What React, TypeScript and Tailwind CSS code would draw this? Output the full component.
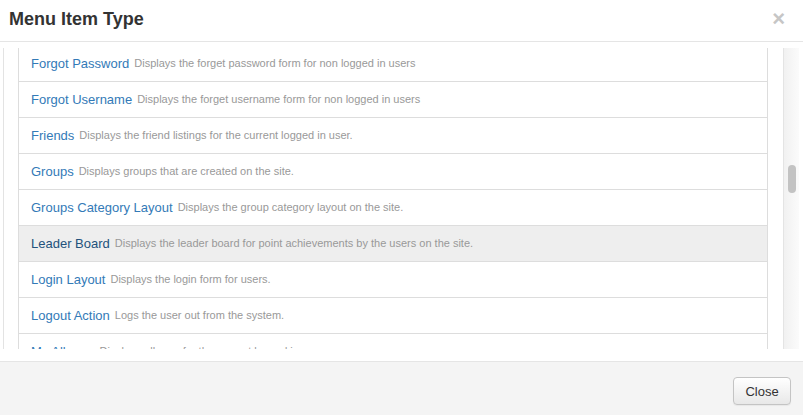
import React from "react";

type Item = { title: string; desc: string; active?: boolean };

const items: Item[] = [
  { title: "Forgot Password", desc: "Displays the forget password form for non logged in users" },
  { title: "Forgot Username", desc: "Displays the forget username form for non logged in users" },
  { title: "Friends", desc: "Displays the friend listings for the current logged in user." },
  { title: "Groups", desc: "Displays groups that are created on the site." },
  { title: "Groups Category Layout", desc: "Displays the group category layout on the site." },
  {
    title: "Leader Board",
    desc: "Displays the leader board for point achievements by the users on the site.",
    active: true,
  },
  { title: "Login Layout", desc: "Displays the login form for users." },
  { title: "Logout Action", desc: "Logs the user out from the system." },
  { title: "My Albums", desc: "Displays albums for the current logged in user." },
  { title: "My Photos", desc: "Displays photos for the current logged in user." },
];

function Row({ item }: { item: Item }) {
  return (
    <div
      className={
        "h-[36px] border-t border-[#dddddd] flex items-center pl-[12px] whitespace-nowrap " +
        (item.active ? "bg-[#eeeeee]" : "bg-white")
      }
    >
      <span
        className={
          "text-[13px] leading-none " + (item.active ? "text-[#23527c]" : "text-[#337ab7]")
        }
      >
        {item.title}
      </span>
      <span className="ml-[5px] text-[11px] leading-none text-[#999999]">{item.desc}</span>
    </div>
  );
}

export default function App() {
  return (
    <div
      className="w-[803px] h-[415px] bg-white flex flex-col overflow-hidden"
      style={{ fontFamily: '"Liberation Sans", Arial, sans-serif' }}
    >
      {/* header */}
      <div className="h-[42px] shrink-0 border-b border-[#e5e5e5] flex items-center justify-between pl-[9px] pr-[18px] pb-[4px]">
        <h4 className="text-[18px] font-bold text-[#333333] leading-none">Menu Item Type</h4>
        <button className="text-[#c6c6c6] text-[22px] font-bold leading-none">×</button>
      </div>

      {/* body */}
      <div className="pt-[6px] shrink-0">
        <div className="h-[301px] flex">
          <div className="ml-[3px] border-l border-[#e3e3e3] flex-1 overflow-hidden pl-[14px]">
            <div className="-mt-[3px] border-l border-r border-[#dddddd]">
              {items.map((it) => (
                <Row key={it.title} item={it} />
              ))}
            </div>
          </div>
          <div className="w-[15px]" />
          <div className="w-[16px] border-l border-[#e4e4e4] bg-gradient-to-r from-[#f1f1f1] to-[#fbfbfb]">
            <div className="mt-[117px] ml-[4px] w-[8px] h-[28px] rounded-full bg-[#c3c3c3]" />
          </div>
          <div className="w-[4px]" />
        </div>
      </div>

      {/* footer */}
      <div className="mt-[12px] flex-1 border-t border-[#e5e5e5] bg-[#f4f4f4] flex justify-end items-start pt-[15px] pr-[12px]">
        <button className="w-[58px] h-[28px] rounded-[4px] border border-[#c4c4c4] bg-gradient-to-b from-white to-[#e8e8e8] text-[13px] leading-none text-[#333333] shadow-[0_1px_1px_rgba(0,0,0,0.05)]">
          Close
        </button>
      </div>
    </div>
  );
}
